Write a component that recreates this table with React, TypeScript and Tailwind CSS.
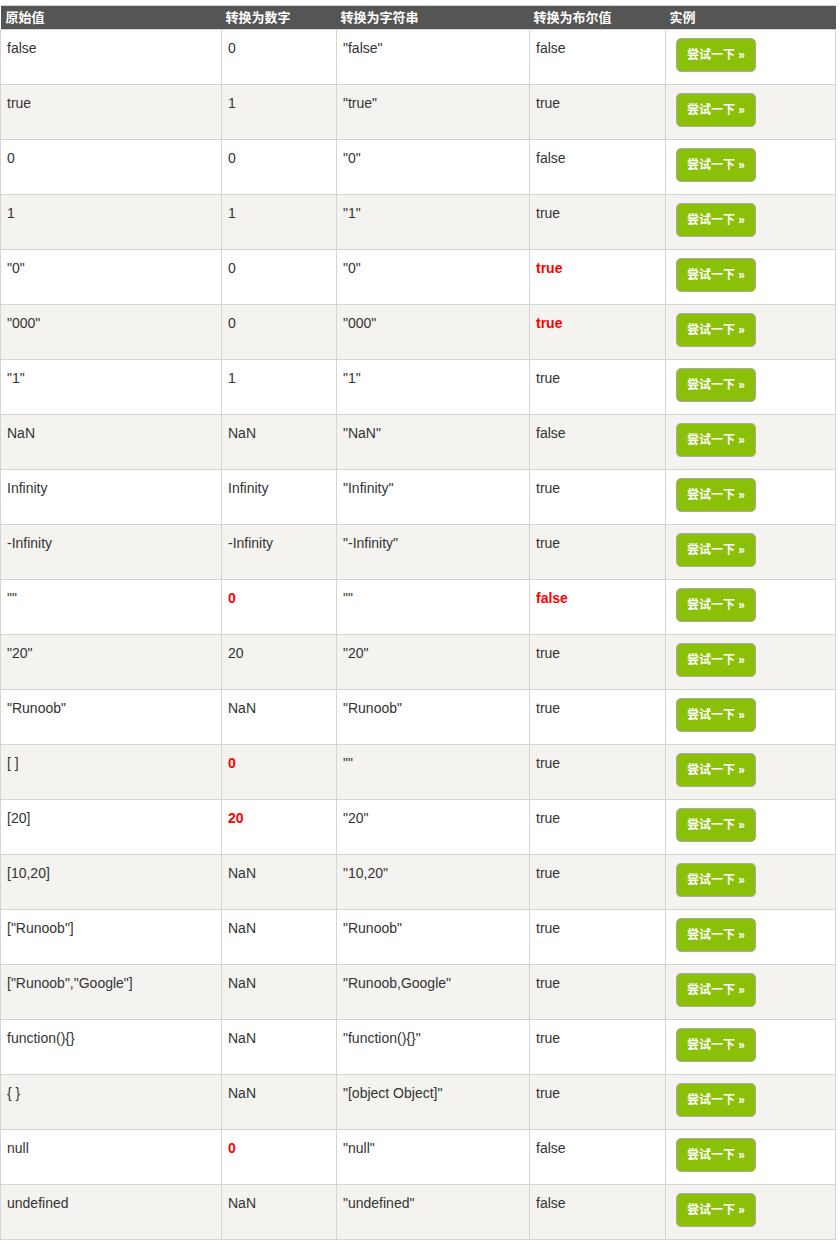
import React from 'react';

type Row = {
  raw: string;
  num: string;
  str: string;
  bool: string;
  numRed?: boolean;
  boolRed?: boolean;
};

const rows: Row[] = [
  { raw: 'false', num: '0', str: '"false"', bool: 'false' },
  { raw: 'true', num: '1', str: '"true"', bool: 'true' },
  { raw: '0', num: '0', str: '"0"', bool: 'false' },
  { raw: '1', num: '1', str: '"1"', bool: 'true' },
  { raw: '"0"', num: '0', str: '"0"', bool: 'true', boolRed: true },
  { raw: '"000"', num: '0', str: '"000"', bool: 'true', boolRed: true },
  { raw: '"1"', num: '1', str: '"1"', bool: 'true' },
  { raw: 'NaN', num: 'NaN', str: '"NaN"', bool: 'false' },
  { raw: 'Infinity', num: 'Infinity', str: '"Infinity"', bool: 'true' },
  { raw: '-Infinity', num: '-Infinity', str: '"-Infinity"', bool: 'true' },
  { raw: '""', num: '0', str: '""', bool: 'false', numRed: true, boolRed: true },
  { raw: '"20"', num: '20', str: '"20"', bool: 'true' },
  { raw: '"Runoob"', num: 'NaN', str: '"Runoob"', bool: 'true' },
  { raw: '[ ]', num: '0', str: '""', bool: 'true', numRed: true },
  { raw: '[20]', num: '20', str: '"20"', bool: 'true', numRed: true },
  { raw: '[10,20]', num: 'NaN', str: '"10,20"', bool: 'true' },
  { raw: '["Runoob"]', num: 'NaN', str: '"Runoob"', bool: 'true' },
  { raw: '["Runoob","Google"]', num: 'NaN', str: '"Runoob,Google"', bool: 'true' },
  { raw: 'function(){}', num: 'NaN', str: '"function(){}"', bool: 'true' },
  { raw: '{ }', num: 'NaN', str: '"[object Object]"', bool: 'true' },
  { raw: 'null', num: '0', str: '"null"', bool: 'false', numRed: true },
  { raw: 'undefined', num: 'NaN', str: '"undefined"', bool: 'false' },
];

const cell = 'border border-[#d4d4d4] align-top px-[6px] pt-[8px] h-[55px] leading-[21px]';
const red = 'text-[#ff0000] font-bold';

const App: React.FC = () => {
  return (
    <div
      className="bg-white w-[840px] min-h-[1246px] pt-[5px]"
      style={{ fontFamily: '"Liberation Sans", "Noto Sans CJK SC", sans-serif' }}
    >
      <table className="w-[835px] table-fixed border-collapse text-[14px] text-[#333]">
        <colgroup>
          <col className="w-[221px]" />
          <col className="w-[115px]" />
          <col className="w-[193px]" />
          <col className="w-[136px]" />
          <col className="w-[170px]" />
        </colgroup>
        <thead>
          <tr className="bg-[#555] text-white text-[13px] font-bold text-left border-t border-[#d4d4d4]">
            <th className="px-[5px] h-[24px] leading-[22px] p-0">原始值</th>
            <th className="px-[4px] h-[24px] leading-[22px] p-0">转换为数字</th>
            <th className="px-[4px] h-[24px] leading-[22px] p-0">转换为字符串</th>
            <th className="px-[4px] h-[24px] leading-[22px] p-0">转换为布尔值</th>
            <th className="px-[4px] h-[24px] leading-[22px] p-0">实例</th>
          </tr>
        </thead>
        <tbody>
          {rows.map((r, i) => (
            <tr key={i} className={i % 2 === 1 ? 'bg-[#f4f3f0]' : 'bg-white'}>
              <td className={cell}>{r.raw}</td>
              <td className={cell}>
                <span className={r.numRed ? red : ''}>{r.num}</span>
              </td>
              <td className={cell}>{r.str}</td>
              <td className={cell}>
                <span className={r.boolRed ? red : ''}>{r.bool}</span>
              </td>
              <td className={cell + ' pl-[10px]'}>
                <button className="w-[80px] h-[34px] bg-[#8ac007] border border-[#a8a8a8] rounded-[5px] text-white text-[12px] font-bold leading-none">
                  尝试一下 »
                </button>
              </td>
            </tr>
          ))}
        </tbody>
      </table>
    </div>
  );
};

export default App;
